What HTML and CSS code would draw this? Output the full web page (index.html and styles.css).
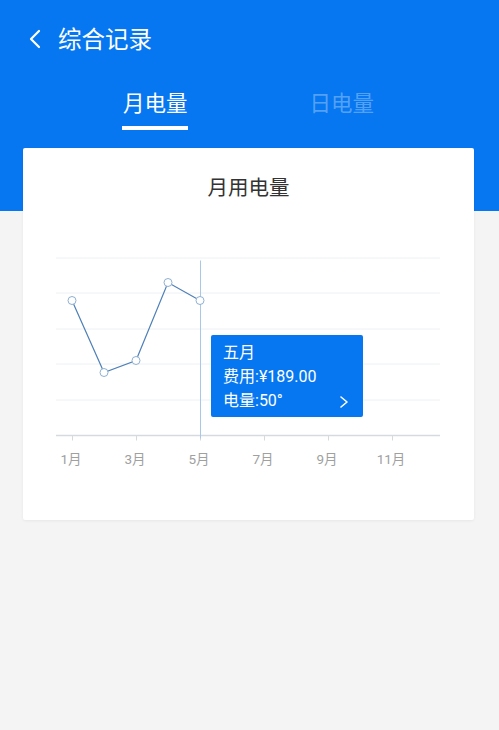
FILE: index.html
```html
<!DOCTYPE html>
<html lang="zh">
<head>
<meta charset="utf-8">
<title>综合记录</title>
<link rel="stylesheet" href="styles.css">
</head>
<body>
<header class="header">
  <div class="topbar">
    <svg class="back" width="16" height="20" viewBox="0 0 16 20"><path d="M12 2 L4 10 L12 18" fill="none" stroke="#fff" stroke-width="2.2" stroke-linecap="round" stroke-linejoin="round"/></svg>
    <h1 class="title">综合记录</h1>
  </div>
  <nav class="tabs">
    <div class="tab active"><span class="tab-label">月电量</span></div>
    <div class="tab"><span class="tab-label">日电量</span></div>
  </nav>
</header>
<main class="content">
  <section class="card">
    <h2 class="card-title">月用电量</h2>
    <div class="chart">
      <svg class="chart-svg" width="451" height="250" viewBox="23 238.5 451 250">
        <g stroke="#eef0f3" stroke-width="1">
          <line x1="56" y1="257.5" x2="440" y2="257.5"/>
          <line x1="56" y1="292.5" x2="440" y2="292.5"/>
          <line x1="56" y1="328.5" x2="440" y2="328.5"/>
          <line x1="56" y1="363.5" x2="440" y2="363.5"/>
          <line x1="56" y1="399.5" x2="440" y2="399.5"/>
        </g>
        <line x1="56" y1="435" x2="440" y2="435" stroke="#d6d9de" stroke-width="1.5"/>
        <g stroke="#d6d9de" stroke-width="1">
          <line x1="72.5" y1="435" x2="72.5" y2="440"/>
          <line x1="136.5" y1="435" x2="136.5" y2="440"/>
          <line x1="200.5" y1="435" x2="200.5" y2="440"/>
          <line x1="264.5" y1="435" x2="264.5" y2="440"/>
          <line x1="328.5" y1="435" x2="328.5" y2="440"/>
          <line x1="392.5" y1="435" x2="392.5" y2="440"/>
        </g>
        <line x1="200.5" y1="260" x2="200.5" y2="438" stroke="#a9c8e8" stroke-width="1"/>
        <polyline points="72,300 104,372 136,360 168,282 200,300" fill="none" stroke="#4d7fb8" stroke-width="1.2"/>
        <g fill="#fff" stroke="#8fb0d2" stroke-width="1">
          <circle cx="72" cy="300" r="4"/>
          <circle cx="104" cy="372" r="4"/>
          <circle cx="136" cy="360" r="4"/>
          <circle cx="168" cy="282" r="4"/>
          <circle cx="200" cy="300" r="4"/>
        </g>
        <g class="axis-label" fill="#a0a0a0" font-size="13.5" text-anchor="middle">
          <text x="71" y="463">1月</text>
          <text x="135" y="463">3月</text>
          <text x="199" y="463">5月</text>
          <text x="263" y="463">7月</text>
          <text x="327" y="463">9月</text>
          <text x="391" y="463">11月</text>
        </g>
      </svg>
      <div class="tooltip">
        <div class="tip-line">五月</div>
        <div class="tip-line">费用:¥189.00</div>
        <div class="tip-line tip-last"><span>电量:50°</span>
          <svg class="tip-arrow" width="10" height="14" viewBox="0 0 10 14"><path d="M2 2 L8 7 L2 12" fill="none" stroke="#fff" stroke-width="1.6" stroke-linecap="round" stroke-linejoin="round"/></svg>
        </div>
      </div>
    </div>
  </section>
</main>
</body>
</html>
```
FILE: styles.css
```css
* { box-sizing: border-box; }
html, body {
  margin: 0;
  padding: 0;
}
body {
  width: 499px;
  height: 730px;
  overflow: hidden;
  background: #f4f4f4;
  font-family: "Noto Sans CJK SC", "Noto Sans", sans-serif;
}
.header {
  background: #0677f1;
  height: 211px;
  color: #fff;
}
.topbar {
  height: 80px;
  display: flex;
  align-items: center;
  padding-left: 27px;
}
.back {
  display: block;
  margin-top: -2px;
}
.title {
  margin: -2px 0 0 15px;
  font-size: 23.5px;
  font-weight: 400;
  line-height: 1;
}
.tabs {
  display: flex;
  padding: 0 64px 0 62px;
}
.tab {
  flex: 1;
  display: flex;
  justify-content: center;
}
.tab-label {
  display: block;
  font-size: 21.5px;
  line-height: 1;
  padding-top: 11px;
  padding-bottom: 13px;
  border-bottom: 4px solid transparent;
  color: rgba(255, 255, 255, 0.32);
}
.tab.active .tab-label {
  color: #fff;
  border-bottom-color: #fff;
  width: 66px;
  text-align: center;
}
.content {
  padding: 0 25px 0 23px;
  margin-top: -63px;
}
.card {
  background: #fff;
  height: 372px;
  border-radius: 2px;
  box-shadow: 0 1px 3px rgba(0, 0, 0, 0.06);
  overflow: hidden;
}
.card-title {
  margin: 0;
  padding-top: 26px;
  height: 91px;
  text-align: center;
  font-size: 20.5px;
  font-weight: 400;
  color: #333;
  line-height: 24px;
}
.chart {
  position: relative;
  height: 250px;
}
.chart-svg {
  display: block;
}
.axis-label {
  font-family: Roboto, "Noto Sans CJK SC", sans-serif;
}
.tooltip {
  position: absolute;
  left: 188px;
  top: 96px;
  width: 152px;
  height: 82px;
  background: #0677f1;
  border-radius: 2px;
  padding: 6px 12px 0 12px;
  color: #fff;
  font-family: Roboto, "Noto Sans CJK SC", sans-serif;
  font-size: 16px;
}
.tip-line {
  height: 24px;
  line-height: 24px;
  white-space: nowrap;
}
.tip-last {
  display: flex;
  justify-content: space-between;
  align-items: center;
}
.tip-arrow {
  display: block;
  margin-right: 2px;
  margin-top: 2px;
}
```
